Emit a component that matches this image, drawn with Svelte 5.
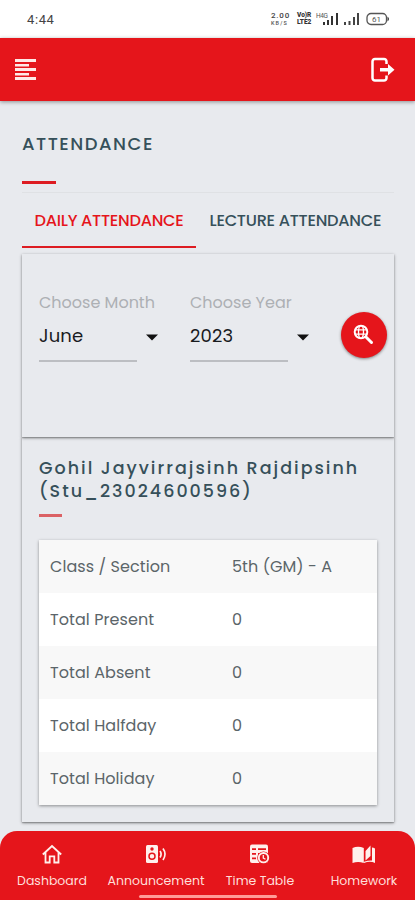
<script>
  const filters = [
    { label: 'Choose Month', value: 'June', cls: 'month' },
    { label: 'Choose Year', value: '2023', cls: 'year' }
  ];
  const rows = [
    ['Class / Section', '5th (GM) - A'],
    ['Total Present', '0'],
    ['Total Absent', '0'],
    ['Total Halfday', '0'],
    ['Total Holiday', '0']
  ];
</script>

<div class="screen">
  <div class="status">
    <span class="clock">4:44</span>
    <div class="indicators">
      <div class="stack rate"><b>2.00</b><i>KB/S</i></div>
      <div class="stack volte"><b>Vo)R</b><i>LTE2</i></div>
      <svg class="sig" width="23" height="14" viewBox="0 0 23 14">
        <text x="0" y="6" font-size="6.5" textLength="12">H4G</text>
        <path d="M7 13v-3h2v3zM11 13V8h2v5zM15 13V4h2v9zM20 13V1h2v12z" fill="#333" />
      </svg>
      <svg class="sig2" width="16" height="14" viewBox="0 0 16 14">
        <path d="M0 13v-3h2v3zM4.500 13V9h2v4zM9 13V5h2v8zM13 13V1h2v12z" fill="#444" />
      </svg>
      <svg class="bat" width="24" height="14" viewBox="0 0 24 14">
        <rect x="1" y="1.500" width="19.500" height="11" rx="4" fill="none" stroke="#555" stroke-width="1.300" />
        <path d="M21.500 4.500q3 2.500 0 5z" fill="#333" />
        <text x="6" y="10" font-size="8" textLength="9">61</text>
      </svg>
    </div>
  </div>

  <header>
    <svg width="22" height="24" viewBox="0 0 22 24">
      <path d="M0 1h21v3H0zM0 5.900h14v2.600H0zM0 10h21v3H0zM0 14.900h14v2.600H0zM0 19h21v3H0z" fill="#ffe9e6" />
    </svg>
    <svg width="24" height="26" viewBox="0 0 24 26">
      <path d="M15.500 7V4.500a2.500 2.500 0 0 0-2.500-2.500H4A2.500 2.500 0 0 0 1.500 4.500v16.500A2.500 2.500 0 0 0 4 23.500h9a2.500 2.500 0 0 0 2.500-2.500v-2.500" fill="none" stroke="#fff" stroke-width="2.500" />
      <path d="M9 11h8V7l6.500 5.700-6.500 5.700v-4H9z" fill="#fff" />
    </svg>
  </header>

  <main>
    <h1><span>ATTENDANCE</span></h1>
    <div class="bar"></div>
    <nav class="tabs">
      <div class="tab active"><span>DAILY ATTENDANCE</span></div>
      <div class="tab lecture"><span>LECTURE ATTENDANCE</span></div>
    </nav>

    <section class="card filter">
      {#each filters as f}
        <div class="field {f.cls}">
          <div class="label"><span>{f.label}</span></div>
          <div class="value">
            <span>{f.value}</span>
            <svg width="12" height="7" viewBox="0 0 12 7"><path d="M0 .500h12L6 6.500z" fill="#111" /></svg>
          </div>
          <div class="line"></div>
        </div>
      {/each}
      <button aria-label="Search">
        <svg width="22" height="22" viewBox="0 0 22 22" fill="none" stroke="#fff">
          <circle cx="8" cy="8" r="6.300" stroke-width="2" />
          <ellipse cx="8" cy="8" rx="2.500" ry="6.300" stroke-width="1.300" />
          <path d="M2 5.900h12M2 10.100h12" stroke-width="1.300" />
          <path d="M13 13l5.500 5.500" stroke-width="3" stroke-linecap="round" />
        </svg>
      </button>
    </section>

    <section class="card student">
      <h2><span>Gohil Jayvirrajsinh Rajdipsinh</span><br /><span>(Stu_23024600596)</span></h2>
      <div class="smallbar"></div>
      <div class="table">
        {#each rows as [name, value]}
          <div class="row">
            <div class="key"><span>{name}</span></div>
            <div class="val"><span>{value}</span></div>
          </div>
        {/each}
      </div>
    </section>
  </main>

  <footer>
    <div class="item">
      <svg width="22" height="22" viewBox="0 0 22 22" fill="none" stroke="#fff0ec" stroke-width="1.800">
        <path d="M1.800 11.500L11 3l9.200 8.500M4.500 9.500V19.500H8.700V13.300h4.600v6.200h4.200V9.500" />
      </svg>
      <span>Dashboard</span>
    </div>
    <div class="item">
      <svg width="22" height="22" viewBox="0 0 22 22">
        <rect x="1" y="2" width="12" height="18" rx="1.500" fill="#fff0ec" />
        <circle cx="7" cy="6" r="1.700" fill="#e5151b" />
        <circle cx="7" cy="13.300" r="3" fill="none" stroke="#e5151b" stroke-width="1.500" />
        <path d="M15 8q2.200 3 0 6.500M18 5.500q4 5.500 0 11.500" fill="none" stroke="#fff0ec" stroke-width="1.700" />
      </svg>
      <span>Announcement</span>
    </div>
    <div class="item">
      <svg width="22" height="22" viewBox="0 0 22 22">
        <path d="M3 1.500h14q2 0 2 2V20H3q-2 0-2-2V3.500q0-2 2-2z" fill="#fff0ec" />
        <path d="M3 6.200h4M9 6.200h8M3 10.800h4M9 10.800h3M3 15.400h4" stroke="#e5151b" stroke-width="1.700" />
        <circle cx="14.500" cy="14.700" r="6.300" fill="#e5151b" />
        <circle cx="14.500" cy="14.700" r="4.700" fill="none" stroke="#fff0ec" stroke-width="1.900" />
        <path d="M14.300 12v3l2.200 1.200" fill="none" stroke="#fff0ec" stroke-width="1.300" />
      </svg>
      <span>Time Table</span>
    </div>
    <div class="item">
      <svg width="24" height="22" viewBox="0 0 24 22">
        <path d="M.500 5Q6 2.500 11.800 5V20Q6 17.800 .500 20zM13.500 8L18.500 2.500V13L13.500 17.500zM20 4.500q1.500.200 3 .900V20q-5-2.300-11 0v-1.200q4-1.500 8-1.300z" fill="#fff0ec" />
      </svg>
      <span>Homework</span>
    </div>
    <div class="home"></div>
  </footer>
</div>

<style>
  :global(body) { margin: 0; background: #e8eaee; }
  .screen {
    width: 415px; height: 900px; overflow: hidden; background: #e8eaee;
    display: flex; flex-direction: column; position: relative;
    font-family: Poppins, Inter, "Noto Sans", sans-serif;
    color: #36505a;
  }
  span { white-space: nowrap; }
  .status { height: 38px; flex: none; background: #fff; display: flex; justify-content: space-between; box-sizing: border-box; padding: 12px 25px 0 27px; color: #444; }
  .clock { font: 13px/15px Roboto, sans-serif; letter-spacing: .6px; }
  .indicators { display: flex; font-family: Roboto, sans-serif; }
  .indicators svg { flex: none; }
  .indicators text { font-family: Roboto, sans-serif; fill: #555; }
  .stack { display: flex; flex-direction: column; white-space: nowrap; }
  .stack b { font-size: 8px; line-height: 8px; font-weight: 500; letter-spacing: .8px; }
  .stack i { font-size: 5.500px; line-height: 6px; font-style: normal; font-weight: 500; letter-spacing: 1.100px; color: #555; }
  .rate { width: 20px; margin-right: 6px; }
  .volte { width: 15px; margin-right: 4px; }
  .volte b, .volte i { font-size: 6.500px; line-height: 7px; font-weight: 900; letter-spacing: 0; color: #333; }
  .sig { margin-right: 5px; }
  .sig2 { margin-right: 6px; }
  header { height: 63px; flex: none; background: #e5151b; display: flex; align-items: center; justify-content: space-between; padding: 0 20px 0 15px; box-shadow: 0 1px 4px rgba(0,0,0,.4); z-index: 1; }
  main { padding: 30px 21px 0 22px; }
  h1 { margin: 0; font-size: 18px; font-weight: 500; line-height: 25px; letter-spacing: 1.500px; }
  .bar { width: 34px; height: 2.500px; margin: 25px 0 8px; background: #dd1c22; }
  .tabs { display: flex; border-top: 1px solid #dfe1e4; height: 55.500px; font-size: 16.200px; font-weight: 500; letter-spacing: -.27px; }
  .tab { width: 174px; flex: none; box-sizing: border-box; line-height: 55px; padding-left: 12.500px; }
  .active { color: #e5151b; border-bottom: 2.500px solid #dd1c22; }
  .lecture { padding-left: 13.500px; }
  .card { position: relative; box-shadow: 0 1px 3px rgba(0,0,0,.42), 0 1px 1px rgba(0,0,0,.16); background: #e8eaee; box-sizing: border-box; width: 372px; }
  .filter { z-index: 1; margin-top: 6px; height: 183px; display: flex; padding: 36px 0 0 17px; }
  .field { width: 151px; flex: none; }
  .label { font-size: 16px; line-height: 26px; color: #adb0b4; }
  .value { display: flex; justify-content: space-between; align-items: center; width: 119px; line-height: 24px; margin-top: 8px; color: #191b1e; font-size: 18px; letter-spacing: .15px; }
  .value svg { margin-top: 3px; }
  .line { width: 98px; height: 1.500px; margin-top: 12px; background: #bcbec2; }
  button { width: 46px; height: 46px; flex: none; margin-top: 22px; border: 0; border-radius: 50%; background: #e5151b; padding: 0; display: flex; align-items: center; justify-content: center; box-shadow: 0 1px 3px rgba(0,0,0,.45); }
  .student { height: 385px; padding: 20px 17px 0; }
  h2 { margin: 0; font-size: 17.500px; font-weight: 500; line-height: 23px; height: 46px; letter-spacing: 2px; }
  .smallbar { width: 23px; height: 3px; margin: 11px 0 23px; background: #db6265; }
  .table { background: #fff; box-shadow: 0 1px 3px rgba(0,0,0,.4); color: #5b6569; font-size: 16px; letter-spacing: .07px; }
  .row { height: 53px; line-height: 53px; display: flex; padding-left: 11px; }
  .row:nth-child(odd) { background: #f8f8f8; }
  .key { width: 182px; }
  footer { position: absolute; left: 0; right: 0; top: 831px; height: 69px; background: #e5151b; border-radius: 17px 17px 0 0; display: flex; }
  .item { width: 104px; flex: none; display: flex; flex-direction: column; align-items: center; padding-top: 12px; color: #ffdfda; font-size: 12.500px; line-height: 16px; gap: 8px; }
  .item svg { flex: none; }
  .home { position: absolute; left: 139px; top: 64px; width: 138px; height: 3px; border-radius: 2px; background: #ff9c98; }
</style>
